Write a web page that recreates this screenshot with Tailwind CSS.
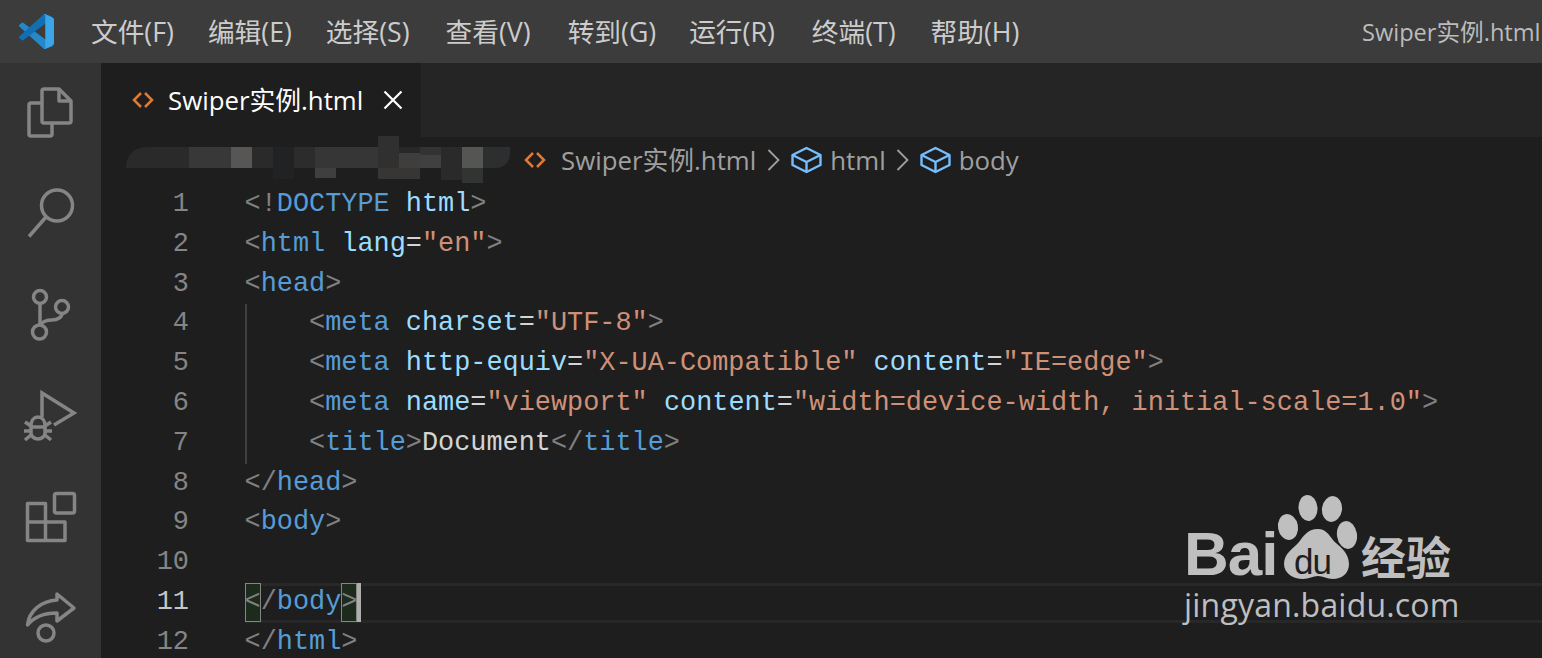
<!DOCTYPE html>
<html lang="zh">
<head>
    <meta charset="UTF-8">
    <title>Swiper实例.html</title>
    <script src="https://cdn.jsdelivr.net/npm/@tailwindcss/browser@4"></script>
</head>
<body class="bg-[#1e1e1e] overflow-hidden font-['Open_Sans','Noto_Sans_CJK_SC',sans-serif]">
<div class="relative w-[1542px] h-[658px] overflow-hidden">
    <!-- 标题栏 -->
    <header class="h-[63px] bg-[#3c3c3c] flex items-center text-[26.700px] text-[#cccccc] whitespace-nowrap">
        <svg class="ml-[19px] w-[35px] h-[35px] shrink-0" viewBox="0 0 100 100">
            <path fill="#2489ca" d="M1.6 36.3a4 4 0 0 1 0-5.9l5.5-5a4 4 0 0 1 5.1-.2L96 88.5v-.4a6 6 0 0 1-3.500 5.600L75.900 99.100a6 6 0 0 1-6.900-1.200z"/>
            <path fill="#1070b3" d="M1.600 63.700a4 4 0 0 0 0 5.900l5.500 5a4 4 0 0 0 5.100.2L96 11.500v.4a6 6 0 0 0-3.500-5.600L75.900.9a6 6 0 0 0-6.900 1.200z"/>
            <path fill="#3ca5ea" d="M75.900 99.100a6 6 0 0 1-6.900-1.200c2.200 2.200 6 .6 6-2.500V4.600c0-3.100-3.800-4.700-6-2.500a6 6 0 0 1 6.900-1.200l20.600 9.900a6 6 0 0 1 3.500 5.600v67.200a6 6 0 0 1-3.500 5.600z"/>
        </svg>
        <nav class="flex pt-[2px]">
            <span class="ml-[37px]">文件(F)</span>
            <span class="ml-[34px]">编辑(E)</span>
            <span class="ml-[34px]">选择(S)</span>
            <span class="ml-[36px]">查看(V)</span>
            <span class="ml-[37px]">转到(G)</span>
            <span class="ml-[33px]">运行(R)</span>
            <span class="ml-[37px]">终端(T)</span>
            <span class="ml-[35px]">帮助(H)</span>
        </nav>
        <span class="absolute left-[1362px] top-[15px] text-[23.600px] text-[#bbbbbb]">Swiper实例.html</span>
    </header>

    <div class="flex h-[595px]">
        <!-- 活动栏 -->
        <aside class="w-[101px] shrink-0 bg-[#333333] flex flex-col items-center pt-[15px] gap-[41.5px]">
            <svg class="w-[60px] h-[60px] shrink-0" viewBox="0 0 60 60" fill="none" stroke="#858585" stroke-width="3.500" stroke-linejoin="round">
                <path d="M23 11h15l12 12v20a2 2 0 0 1-2 2H23a2 2 0 0 1-2-2V13a2 2 0 0 1 2-2z"/>
                <path d="M38 11v12h12"/>
                <path d="M21 25H10a2 2 0 0 0-2 2v29a2 2 0 0 0 2 2h19a2 2 0 0 0 2-2V45"/>
            </svg>
            <svg class="mt-[3px] w-[60px] h-[60px] shrink-0" viewBox="0 0 60 60" fill="none" stroke="#858585" stroke-width="3.500">
                <circle cx="36" cy="22.500" r="15.500"/>
                <path d="M25 34L8 53.500"/>
            </svg>
            <svg class="mt-[1px] w-[60px] h-[60px] shrink-0" viewBox="0 0 60 60" fill="none" stroke="#858585" stroke-width="3.500">
                <circle cx="19" cy="12" r="6.500"/>
                <circle cx="41" cy="22" r="6.500"/>
                <circle cx="18.500" cy="47" r="7"/>
                <path d="M19 18.500V40"/>
                <path d="M19 40c3-4 7-5 12-5 6 0 10-3 10-6.500"/>
            </svg>
            <svg class="-mt-[1px] w-[60px] h-[60px] shrink-0" viewBox="0 0 60 60" fill="none" stroke="#858585" stroke-width="3.500">
                <path d="M21 31V7l32 20-20 12"/>
                <path d="M10 40c0-6 3-9 7-9s7 3 7 9v7c0 3-3 6-7 6s-7-3-7-6z"/>
                <path d="M10 41h14M4 36l6 4M30 36l-6 4M4 54l6-5M30 54l-6-5M3 45h6M25 45h6"/>
            </svg>
            <svg class="w-[60px] h-[60px] shrink-0" viewBox="0 0 60 60" fill="none" stroke="#858585" stroke-width="3.500" stroke-linejoin="round">
                <rect x="33.500" y="6.500" width="20" height="19.500" rx="2"/>
                <path d="M6.500 16.500h18v37h-18zM24.500 35h19.500v18.500H24.500zM6.500 35h18"/>
            </svg>
            <svg class="-mt-[2px] w-[60px] h-[60px] shrink-0" viewBox="0 0 60 60" fill="none" stroke="#858585" stroke-width="3.500" stroke-linejoin="round">
                <path d="M6.500 38C8 24 20 14 36 13V7l17 14-17 13v-8C24 26 13 30 6.500 38z"/>
                <circle cx="25" cy="46" r="8"/>
            </svg>
        </aside>

        <main class="flex-1 min-w-0 flex flex-col">
            <!-- 标签栏 -->
            <div class="h-[74px] bg-[#252526] flex shrink-0">
                <div class="w-[320px] bg-[#1e1e1e] flex items-center">
                    <svg class="ml-[31px] w-[22px] h-[20px]" viewBox="0 0 22 20" fill="none" stroke="#e37933" stroke-width="2.500"><path d="M9 3L2 10l7 7M13 3l7 7-7 7"/></svg>
                    <span class="ml-[14px] text-[25.800px] text-white whitespace-nowrap">Swiper实例.html</span>
                    <svg class="ml-[20px] w-[20px] h-[20px]" viewBox="0 0 20 20" stroke="#ffffff" stroke-width="2.200"><path d="M1.500 1.500l17 17M18.500 1.500l-17 17"/></svg>
                </div>
            </div>

            <!-- 面包屑 -->
            <div class="h-[46px] shrink-0 flex items-center pl-[25px] text-[25.800px] text-[#a0a0a0] whitespace-nowrap">
                <!-- 打码区域 -->
                <div class="w-[389px] h-[46px] pt-[10px] flex items-start shrink-0">
                    <div class="w-[63px] h-[21px] rounded-tl-[20px] bg-[#2a2a2a]"></div>
                    <div class="w-[42px] h-[21px] bg-[#383838]"></div>
                    <div class="w-[21px] h-[21px] bg-[#585654]"></div>
                    <div class="w-[21px] h-[21px] bg-[#2a2a2a]"></div>
                    <div class="w-[21px] h-[32px] bg-[#202224]"></div>
                    <div class="w-[21px] h-[21px] bg-[#2c2c2c]"></div>
                    <div class="w-[21px]"><div class="h-[21px] bg-[#363636]"></div><div class="h-[10px] bg-[#3f3f3f]"></div></div>
                    <div class="w-[42px] h-[21px] bg-[#363636]"></div>
                    <div class="w-[21px] -mt-[11px]"><div class="h-[32px] bg-[#303030]"></div><div class="h-[11px] bg-[#383634]"></div></div>
                    <div class="w-[21px]"><div class="h-[6px] bg-[#282828]"></div><div class="h-[15px] bg-[#3e3e3e]"></div><div class="h-[11px] bg-[#383634]"></div></div>
                    <div class="w-[21px]"><div class="h-[8px] bg-[#333333]"></div><div class="h-[13px] bg-[#404040]"></div></div>
                    <div class="w-[21px] h-[33px] bg-[#2a2a2a]"></div>
                    <div class="w-[21px]"><div class="h-[21px] bg-[#555554]"></div><div class="h-[15px] bg-[#323434]"></div></div>
                    <div class="w-[27px] h-[21px] rounded-br-[14px] bg-[#2c2e30]"></div>
                </div>
                <svg class="ml-[9px] w-[22px] h-[20px] shrink-0" viewBox="0 0 22 20" fill="none" stroke="#e37933" stroke-width="2.500"><path d="M9 3L2 10l7 7M13 3l7 7-7 7"/></svg>
                <span class="ml-[15px]">Swiper实例.html</span>
                <svg class="ml-[11px] w-[13px] h-[24px] shrink-0" viewBox="0 0 13 24" fill="none" stroke="#a0a0a0" stroke-width="1.800"><path d="M1.500 2l10 10-10 10"/></svg>
                <svg class="ml-[11px] w-[31px] h-[28px] shrink-0" viewBox="0 0 31 28" fill="none" stroke="#75beff" stroke-width="2.400" stroke-linejoin="round">
                    <path d="M15.500 2L29.500 9v10l-14 7-14-7V9z"/>
                    <path d="M1.500 9l14 7 14-7M15.500 16v10"/>
                </svg>
                <span class="ml-[8px]">html</span>
                <svg class="ml-[10px] w-[13px] h-[24px] shrink-0" viewBox="0 0 13 24" fill="none" stroke="#a0a0a0" stroke-width="1.800"><path d="M1.500 2l10 10-10 10"/></svg>
                <svg class="ml-[11px] w-[31px] h-[28px] shrink-0" viewBox="0 0 31 28" fill="none" stroke="#75beff" stroke-width="2.400" stroke-linejoin="round">
                    <path d="M15.500 2L29.500 9v10l-14 7-14-7V9z"/>
                    <path d="M1.500 9l14 7 14-7M15.500 16v10"/>
                </svg>
                <span class="ml-[8px]">body</span>
            </div>

            <!-- 代码 -->
            <div class="flex-1 pt-[2px] font-['Liberation_Mono',monospace] text-[26.880px] leading-[39.800px] text-[#d4d4d4] [&_span]:whitespace-pre">
                <div class="flex h-[39.800px]"><span class="w-[88px] text-right text-[#858585]">1</span><span class="ml-[55.500px]"><span class="text-[#808080]">&lt;!</span><span class="text-[#569cd6]">DOCTYPE</span> <span class="text-[#9cdcfe]">html</span><span class="text-[#808080]">&gt;</span></span></div>
                <div class="flex h-[39.800px]"><span class="w-[88px] text-right text-[#858585]">2</span><span class="ml-[55.500px]"><span class="text-[#808080]">&lt;</span><span class="text-[#569cd6]">html</span> <span class="text-[#9cdcfe]">lang</span>=<span class="text-[#ce9178]">"en"</span><span class="text-[#808080]">&gt;</span></span></div>
                <div class="flex h-[39.800px]"><span class="w-[88px] text-right text-[#858585]">3</span><span class="ml-[55.500px]"><span class="text-[#808080]">&lt;</span><span class="text-[#569cd6]">head</span><span class="text-[#808080]">&gt;</span></span></div>
                <div class="flex h-[39.800px]"><span class="w-[88px] text-right text-[#858585]">4</span><span class="ml-[55.500px] pl-[62.500px] border-l-2 border-[#404040]"><span class="text-[#808080]">&lt;</span><span class="text-[#569cd6]">meta</span> <span class="text-[#9cdcfe]">charset</span>=<span class="text-[#ce9178]">"UTF-8"</span><span class="text-[#808080]">&gt;</span></span></div>
                <div class="flex h-[39.800px]"><span class="w-[88px] text-right text-[#858585]">5</span><span class="ml-[55.500px] pl-[62.500px] border-l-2 border-[#404040]"><span class="text-[#808080]">&lt;</span><span class="text-[#569cd6]">meta</span> <span class="text-[#9cdcfe]">http-equiv</span>=<span class="text-[#ce9178]">"X-UA-Compatible"</span> <span class="text-[#9cdcfe]">content</span>=<span class="text-[#ce9178]">"IE=edge"</span><span class="text-[#808080]">&gt;</span></span></div>
                <div class="flex h-[39.800px]"><span class="w-[88px] text-right text-[#858585]">6</span><span class="ml-[55.500px] pl-[62.500px] border-l-2 border-[#404040]"><span class="text-[#808080]">&lt;</span><span class="text-[#569cd6]">meta</span> <span class="text-[#9cdcfe]">name</span>=<span class="text-[#ce9178]">"viewport"</span> <span class="text-[#9cdcfe]">content</span>=<span class="text-[#ce9178]">"width=device-width, initial-scale=1.0"</span><span class="text-[#808080]">&gt;</span></span></div>
                <div class="flex h-[39.800px]"><span class="w-[88px] text-right text-[#858585]">7</span><span class="ml-[55.500px] pl-[62.500px] border-l-2 border-[#404040]"><span class="text-[#808080]">&lt;</span><span class="text-[#569cd6]">title</span><span class="text-[#808080]">&gt;</span>Document<span class="text-[#808080]">&lt;/</span><span class="text-[#569cd6]">title</span><span class="text-[#808080]">&gt;</span></span></div>
                <div class="flex h-[39.800px]"><span class="w-[88px] text-right text-[#858585]">8</span><span class="ml-[55.500px]"><span class="text-[#808080]">&lt;/</span><span class="text-[#569cd6]">head</span><span class="text-[#808080]">&gt;</span></span></div>
                <div class="flex h-[39.800px]"><span class="w-[88px] text-right text-[#858585]">9</span><span class="ml-[55.500px]"><span class="text-[#808080]">&lt;</span><span class="text-[#569cd6]">body</span><span class="text-[#808080]">&gt;</span></span></div>
                <div class="flex h-[39.800px]"><span class="w-[88px] text-right text-[#858585]">10</span></div>
                <div class="flex h-[39.800px]">
                    <span class="w-[88px] text-right text-[#c6c6c6]">11</span>
                    <div class="ml-[55.500px] flex-1 border-y-[3px] border-[#282828] h-[39.800px] flex leading-[33.800px]">
                        <span class="relative"><span class="absolute left-0 -top-[3px] w-[16px] h-[39px] border border-[#858585] bg-[#1d2b1d]"></span><span class="relative text-[#808080]">&lt;</span></span><span class="text-[#808080]">/</span><span class="text-[#569cd6]">body</span><span class="relative"><span class="absolute left-0 -top-[3px] w-[16px] h-[39px] border border-[#858585] bg-[#1d2b1d]"></span><span class="relative text-[#808080]">&gt;</span></span>
                        <span class="w-[4px] h-[39px] -mt-[3px] bg-[#aeafad]"></span>
                    </div>
                </div>
                <div class="flex h-[39.800px]"><span class="w-[88px] text-right text-[#858585]">12</span><span class="ml-[55.500px]"><span class="text-[#808080]">&lt;/</span><span class="text-[#569cd6]">html</span><span class="text-[#808080]">&gt;</span></span></div>
            </div>
        </main>
    </div>

    <!-- 水印 -->
    <div class="absolute left-[1180px] top-[495px] w-[290px] h-[135px] text-[#bfbfbf]">
        <svg class="absolute left-[88px] top-0 w-[120px] h-[90px]" viewBox="0 0 120 90" fill="#bfbfbf">
            <ellipse cx="20" cy="32" rx="10" ry="13" transform="rotate(-10 20 32)"/>
            <ellipse cx="40" cy="13" rx="9.500" ry="13" transform="rotate(-5 40 13)"/>
            <ellipse cx="64" cy="14" rx="10" ry="13" transform="rotate(8 64 14)"/>
            <ellipse cx="79" cy="40" rx="10" ry="14" transform="rotate(-8 79 40)"/>
            <path d="M50 34c8 0 11 6 15 11 4 5 16 11 16 24 0 10-8 15-16 15-6 0-10-3-15-3s-9 3-15 3c-10 0-19-6-19-15 0-11 10-16 15-22 4-5 8-13 19-13z"/>
        </svg>
        <span class="absolute left-[4px] top-[24px] font-['Liberation_Sans',sans-serif] font-bold text-[62px] leading-[70px] tracking-[-1px]">Bai</span>
        <span class="absolute left-[114px] top-[47px] font-['Liberation_Sans',sans-serif] text-[35px] leading-[40px] tracking-[-1px] text-[#1e1e1e]">du</span>
        <span class="absolute left-[181px] top-[33px] font-['Noto_Sans_CJK_SC',sans-serif] font-bold text-[45px] leading-[55px] whitespace-nowrap">经验</span>
        <span class="absolute left-[4px] top-[90px] font-['Open_Sans',sans-serif] text-[32px] leading-[40px] tracking-[0.2px] whitespace-nowrap">jingyan.baidu.com</span>
    </div>
</div>
</body>
</html>
